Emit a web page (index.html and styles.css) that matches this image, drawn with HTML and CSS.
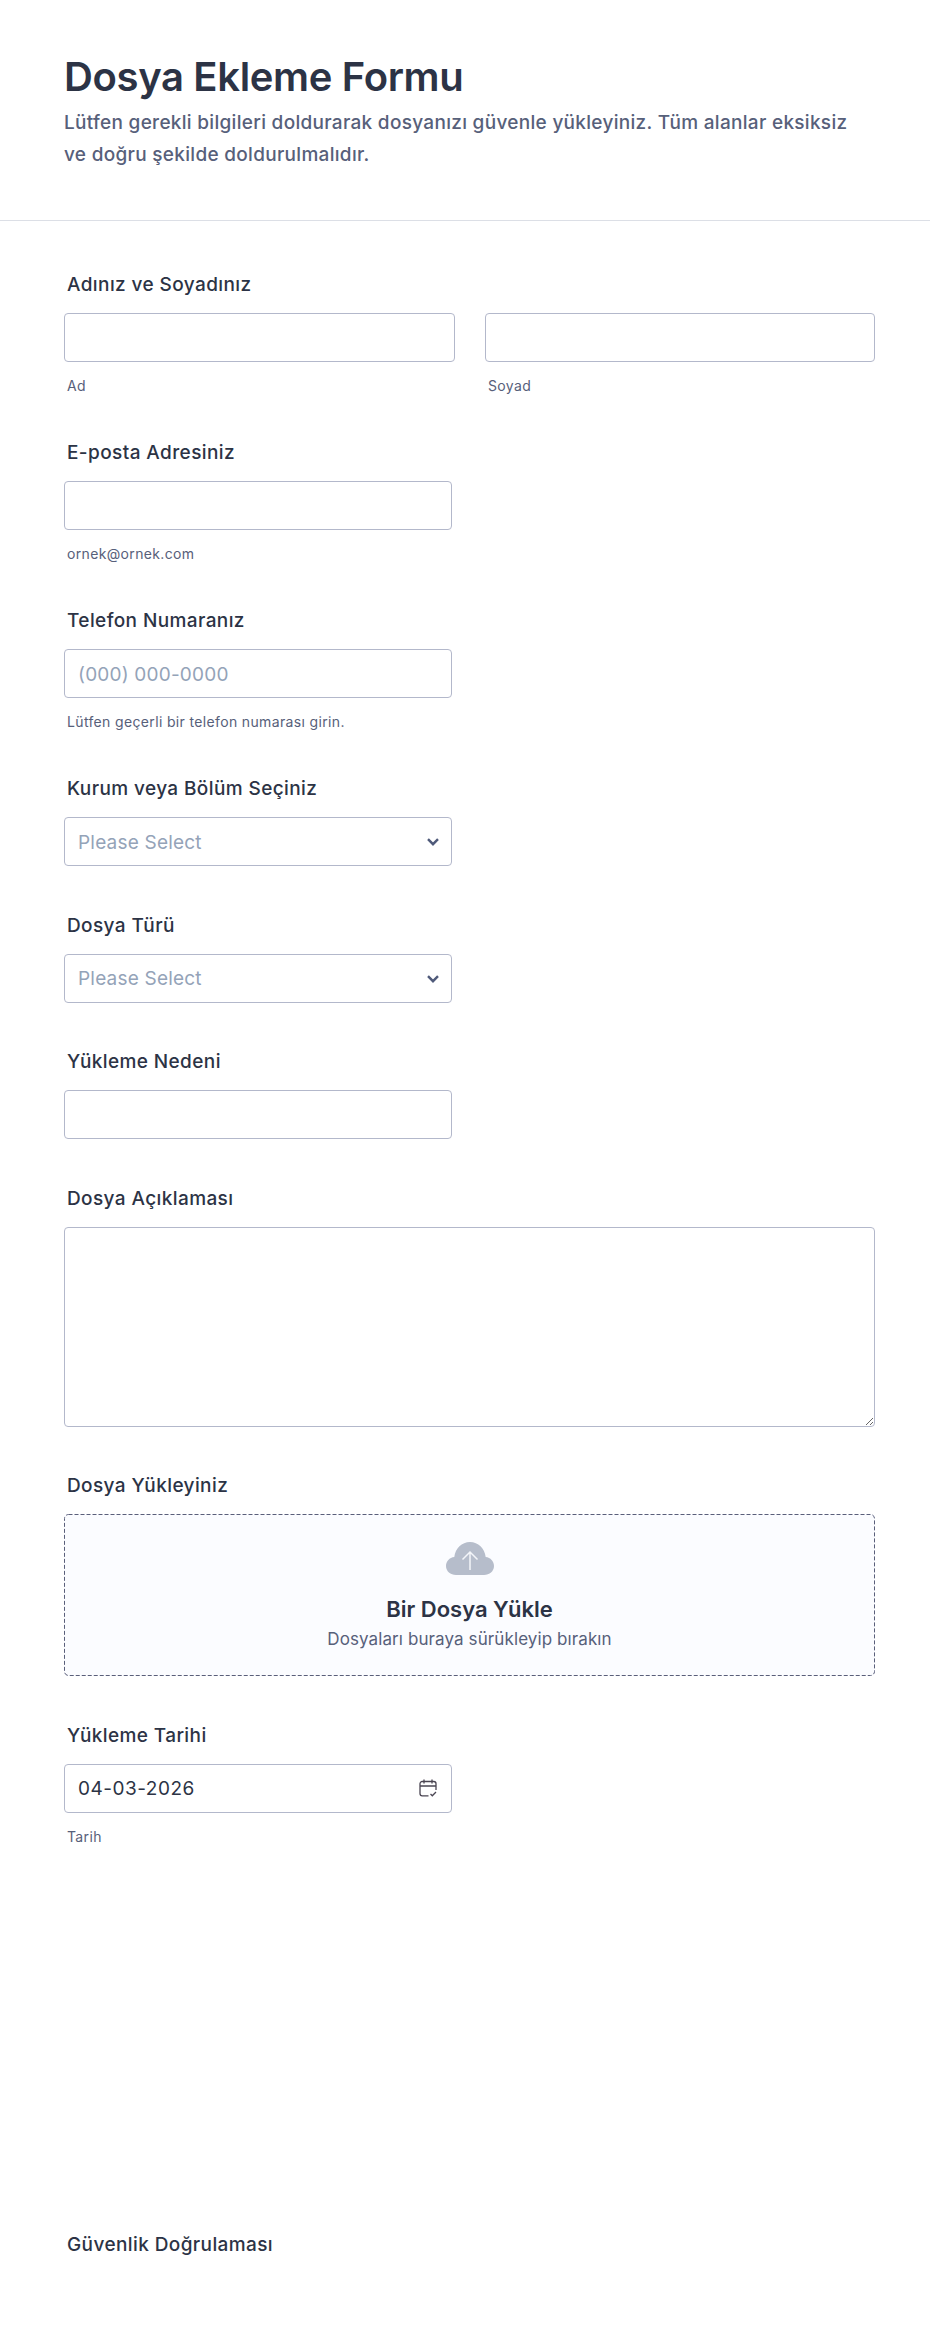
FILE: index.html
```html
<!DOCTYPE html>
<html lang="tr">
  <head>
    <meta charset="utf-8">
    <title>Dosya Ekleme Formu</title>
    <link rel="stylesheet" href="styles.css">
  </head>
  <body>
    <form class="form">
      <header class="form-header">
        <h1>Dosya Ekleme Formu</h1>
        <p>Lütfen gerekli bilgileri doldurarak dosyanızı güvenle yükleyiniz. Tüm alanlar eksiksiz ve doğru şekilde doldurulmalıdır.</p>
      </header>

      <div class="form-body">
        <div class="field">
          <label class="field-label">Adınız ve Soyadınız</label>
          <div class="name-row">
            <div>
              <input type="text" class="input">
              <span class="sublabel">Ad</span>
            </div>
            <div>
              <input type="text" class="input">
              <span class="sublabel">Soyad</span>
            </div>
          </div>
        </div>

        <div class="field half">
          <label class="field-label">E-posta Adresiniz</label>
          <input type="email" class="input">
          <span class="sublabel">ornek@ornek.com</span>
        </div>

        <div class="field half">
          <label class="field-label">Telefon Numaranız</label>
          <input type="tel" class="input" placeholder="(000) 000-0000">
          <span class="sublabel">Lütfen geçerli bir telefon numarası girin.</span>
        </div>

        <div class="field half">
          <label class="field-label">Kurum veya Bölüm Seçiniz</label>
          <div class="control">
            <select class="input select">
              <option>Please Select</option>
            </select>
            <svg class="chevron" viewBox="0 0 12 8" width="12" height="8"><path d="M1 1.200l5 5 5-5" fill="none" stroke="#4f5a7a" stroke-width="2.400"/></svg>
          </div>
        </div>

        <div class="field half">
          <label class="field-label">Dosya Türü</label>
          <div class="control">
            <select class="input select">
              <option>Please Select</option>
            </select>
            <svg class="chevron" viewBox="0 0 12 8" width="12" height="8"><path d="M1 1.200l5 5 5-5" fill="none" stroke="#4f5a7a" stroke-width="2.400"/></svg>
          </div>
        </div>

        <div class="field half">
          <label class="field-label">Yükleme Nedeni</label>
          <input type="text" class="input">
        </div>

        <div class="field">
          <label class="field-label">Dosya Açıklaması</label>
          <textarea class="input textarea"></textarea>
        </div>

        <div class="field">
          <label class="field-label">Dosya Yükleyiniz</label>
          <div class="upload">
            <svg class="upload-border"><rect x="0.5" y="0.5" rx="4" class="upload-rect"/></svg>
            <svg class="cloud" viewBox="0 0 48 33" width="48" height="33">
              <path d="M10 33C4.500 33 0 29.200 0 24c0-4.800 3.500-8.500 8.300-9C9.300 6.500 15.800 0 24 0s14.700 6.500 15.700 15c4.800.5 8.300 4.200 8.300 9 0 5.200-4.500 9-10 9z" fill="#b6bdcb"/>
              <path d="M24 28V10M16.500 17.500L24 10l7.500 7.500" fill="none" stroke="#f3f5f9" stroke-width="1.500"/>
            </svg>
            <strong>Bir Dosya Yükle</strong>
            <span>Dosyaları buraya sürükleyip bırakın</span>
          </div>
        </div>

        <div class="field half">
          <label class="field-label">Yükleme Tarihi</label>
          <div class="control">
            <input type="text" class="input date" value="04-03-2026">
            <svg class="calendar" viewBox="0 0 18 18" width="18" height="18" fill="none" stroke="#4a4552" stroke-width="1.300">
              <path d="M9.500 16.800H3.200A2.200 2.200 0 0 1 1 14.600V4.700a2.200 2.200 0 0 1 2.200-2.200h11.600A2.200 2.200 0 0 1 17 4.700v6.300"/>
              <path d="M1 7h16M5 .5v4M13 .5v4M11.500 15l1.800 1.800L17 13"/>
            </svg>
          </div>
          <span class="sublabel">Tarih</span>
        </div>

        <div class="captcha-space"></div>

        <div class="field">
          <label class="field-label">Güvenlik Doğrulaması</label>
        </div>
      </div>
    </form>
  </body>
</html>
```

FILE: styles.css
```css
* {
  box-sizing: border-box;
}

body {
  margin: 0;
  min-height: 2331px;
  background-color: #fff;
  font-family: Inter, "Noto Sans", sans-serif;
  color: #2c3345;
}

.form-header {
  height: 221px;
  padding: 52px 60px 0 64px;
  border-bottom: 1px solid #dcdfe6;
}

.form-header h1 {
  margin: 0;
  font-size: 40px;
  line-height: 50px;
  font-weight: 600;
  letter-spacing: -0.35px;
}

.form-header p {
  margin: 0;
  padding-top: 5px;
  font-size: 19px;
  line-height: 32px;
  font-weight: 500;
  letter-spacing: 0.3px;
  color: #57607a;
}

.form-body {
  padding: 0 55px 0 64px;
}

.field {
  padding-top: 22px;
  padding-bottom: 23.5px;
}

.field.half {
  width: 388px;
}

.field:first-child {
  padding-top: 50px;
}

.field-label {
  display: block;
  padding-left: 3px;
  margin-bottom: 14px;
  font-size: 19px;
  line-height: 28px;
  font-weight: 500;
  letter-spacing: 0.4px;
}

.name-row {
  display: grid;
  grid-template-columns: 391px 390px;
  gap: 30px;
}

.input {
  display: block;
  width: 100%;
  height: 49px;
  padding: 1px 13px 0;
  border: 1px solid #b3b8cb;
  border-radius: 4px;
  background-color: #fff;
  font-family: inherit;
  font-size: 19px;
  letter-spacing: 0.2px;
  color: #2c3345;
  outline: none;
}

.input::placeholder {
  color: #94a3b8;
  opacity: 1;
}

.date {
  letter-spacing: 0.5px;
}

.sublabel {
  display: block;
  margin-top: 17px;
  margin-bottom: 0.5px;
  padding-left: 3px;
  font-size: 14px;
  line-height: 14px;
  letter-spacing: 0.35px;
  color: #57607a;
}

.control {
  position: relative;
}

.select {
  appearance: none;
  color: #94a3b8;
}

.chevron {
  position: absolute;
  right: 13px;
  top: 21px;
}

.calendar {
  position: absolute;
  right: 15px;
  top: 15px;
}

.textarea {
  height: 200px;
  padding: 10px 13px;
}

.upload {
  position: relative;
  display: flex;
  flex-direction: column;
  align-items: center;
  height: 162px;
  padding-top: 28px;
  border-radius: 4px;
  background-color: #fbfcff;
}

/* dashes are longer than what border: dashed gives */
.upload-border {
  position: absolute;
  left: 0;
  top: 0;
  width: 100%;
  height: 100%;
}

.upload-rect {
  width: calc(100% - 1px);
  height: calc(100% - 1px);
  fill: none;
  stroke: #5a5f7a;
  stroke-dasharray: 4 2;
}

.upload strong {
  margin-top: 19px;
  font-size: 22px;
  line-height: 30px;
  font-weight: 600;
}

.upload span {
  margin-top: 3px;
  font-size: 17px;
  line-height: 24px;
  letter-spacing: 0.1px;
  color: #57607a;
}

.captcha-space {
  height: 341px;
}
```
